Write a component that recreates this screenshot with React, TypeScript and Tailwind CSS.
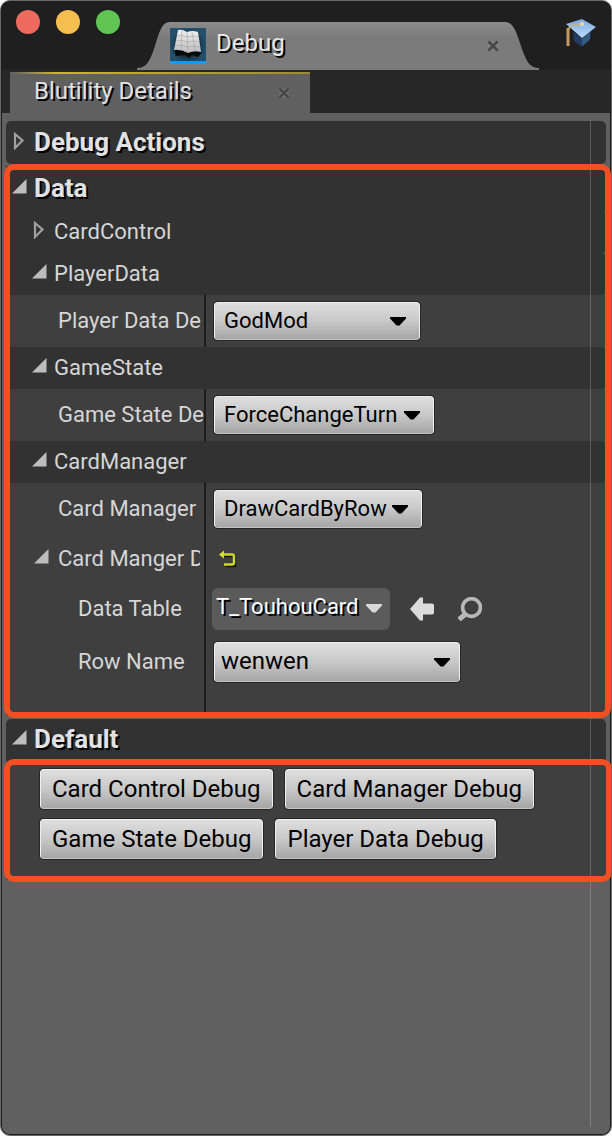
import type { ReactNode } from "react";

const FACE =
  "border border-[#efefef] border-b-[#c4c4c4] bg-linear-to-b from-[#dedede] via-[#c8c8c8] to-[#a6a6a6] text-black outline outline-[#262626] rounded-[3px]";

function OpenArrow() {
  return (
    <svg width="16" height="16" viewBox="0 0 16 16" aria-hidden="true">
      <path d="M14.500 0V14.500H0Z" fill="#bdbdbd" />
    </svg>
  );
}

function ClosedArrow() {
  return (
    <svg width="12" height="18" viewBox="0 0 12 18" aria-hidden="true">
      <path d="M3 2L10.500 8.500L3 16Z" fill="none" stroke="#a0a0a0" strokeWidth="2.200" />
    </svg>
  );
}

function Cross() {
  return (
    <svg width="12" height="12" viewBox="0 0 12 12" aria-hidden="true">
      <path d="M2 2L10 10M10 2L2 10" stroke="#8c8c8c" strokeWidth="5" opacity=".5" />
      <path d="M1.500 1.500L10.500 10.500M10.500 1.500L1.500 10.500" stroke="#484848" strokeWidth="2.600" />
    </svg>
  );
}

function Highlight({ className }: { className: string }) {
  return (
    <div
      className={`pointer-events-none absolute z-20 rounded-[10px] border-6 border-[#f15025] ${className}`}
    />
  );
}

function CategoryHeader({ title, open, className }: { title: string; open: boolean; className: string }) {
  return (
    <button
      type="button"
      aria-expanded={open}
      className={`flex w-full items-center bg-[#323232] pb-0.5 pl-1.5 text-left ${className}`}
    >
      <span className="flex w-[22px] pb-0.5">{open ? <OpenArrow /> : <ClosedArrow />}</span>
      <span className="text-[26px] leading-8 font-bold text-[#e2e2e2] [text-shadow:2px_2px_0_#000]">{title}</span>
    </button>
  );
}

function GroupHeader({ title, open }: { title: string; open: boolean }) {
  return (
    <button
      type="button"
      aria-expanded={open}
      className="flex h-[42px] w-full items-center rounded-r bg-[#323232] pl-[26px] text-left text-[22px] leading-7"
    >
      <span className="flex w-[22px] pb-1">{open ? <OpenArrow /> : <ClosedArrow />}</span>
      {title}
    </button>
  );
}

function PropertyRow({
  label,
  htmlFor,
  height,
  indent,
  arrow = false,
  children,
}: {
  label: string;
  htmlFor?: string;
  height: string;
  indent: string;
  arrow?: boolean;
  children?: ReactNode;
}) {
  return (
    <div className={`flex bg-[#3f3f3f] ${height}`}>
      <div className={`flex w-[198px] shrink-0 items-center overflow-hidden text-[22px] leading-7 ${indent}`}>
        {arrow && (
          <button type="button" aria-label={`Collapse ${label}`} className="flex w-6 shrink-0 pb-1">
            <OpenArrow />
          </button>
        )}
        {htmlFor ? (
          <label htmlFor={htmlFor} className="whitespace-nowrap">
            {label}
          </label>
        ) : (
          <span className="mr-1 overflow-hidden whitespace-nowrap">{label}</span>
        )}
      </div>
      <div className="flex min-w-0 flex-1 items-center border-l-2 border-[#1c1c1c] pl-2">{children}</div>
    </div>
  );
}

function Dropdown({
  id,
  value,
  className,
  arrowClass = "right-3.5",
}: {
  id: string;
  value: string;
  className: string;
  arrowClass?: string;
}) {
  return (
    <div className="relative">
      <select id={id} className={`block appearance-none ${FACE} ${className}`}>
        <option>{value}</option>
      </select>
      <svg
        className={`pointer-events-none absolute top-1/2 -mt-1 ${arrowClass}`}
        width="16"
        height="9"
        viewBox="0 0 16 9"
        aria-hidden="true"
      >
        <path d="M0 0H16V1.500L9.500 8.500H6.500L0 1.500Z" fill="#000" />
      </svg>
    </div>
  );
}

function BookIcon() {
  return (
    <svg width="36" height="36" viewBox="0 0 36 36" aria-hidden="true">
      <defs>
        <radialGradient id="bookBg">
          <stop offset="0" stopColor="#06121a" />
          <stop offset=".6" stopColor="#153447" />
          <stop offset="1" stopColor="#24506b" />
        </radialGradient>
        <linearGradient id="bookPage" x2="0" y2="1">
          <stop offset="0" stopColor="#f0f0f0" />
          <stop offset="1" stopColor="#bcbcbc" />
        </linearGradient>
      </defs>
      <rect width="36" height="36" fill="url(#bookBg)" />
      <path d="M4 22L32 24L28 29L22 27L19 30L15 27L6 28Z" fill="#07090b" />
      <path d="M8 2Q12 1 17 4Q22 2 28 4L31 24Q24 22 18 25Q11 21 4 22Z" fill="url(#bookPage)" />
      <path
        d="M17 4L18 25M12 3L11 21M22 4L25 22M7 8Q12 6 17 9M17 9Q23 7 29 9M6 13Q12 11 17 14Q24 12 30 14M5 18Q12 16 18 19Q24 17 31 19"
        fill="none"
        stroke="#999"
        strokeWidth=".5"
      />
      <rect y="33" width="36" height="3" fill="#0a9bff" />
    </svg>
  );
}

function CapIcon() {
  return (
    <svg width="32" height="30" viewBox="0 0 32 30" aria-hidden="true">
      <defs>
        <linearGradient id="capTop" x2="0" y2="1">
          <stop offset="0" stopColor="#7ba8e0" />
          <stop offset="1" stopColor="#b9dcfb" />
        </linearGradient>
      </defs>
      <path d="M8 14L9 23L17 29L25 22L26 13L17 20Z" fill="#233c66" />
      <path d="M17 21L25 14V21L17 28Z" fill="#365b80" />
      <path d="M1 6L17 1L31 9L17 20Z" fill="url(#capTop)" />
      <path d="M17 6L5 8L3 13V27" fill="none" stroke="#c9b184" strokeWidth="1.500" />
      <path d="M3 10V28" stroke="#c79a5c" strokeWidth="3" />
      <circle cx="17" cy="6" r="2" fill="#f0d89c" />
    </svg>
  );
}

const ACTIONS = ["Card Control Debug", "Card Manager Debug", "Game State Debug", "Player Data Debug"];

export default function App() {
  return (
    <div className="bg-white font-['Roboto',sans-serif] text-[#d6d6d6]">
      <div className="relative flex min-h-screen flex-col overflow-hidden rounded-[10px] border border-[#686868] bg-[#606060]">
        <div className="pointer-events-none absolute inset-0 z-10 rounded-[9px] border border-[#1e1e1e]" />

        <header className="flex h-[69px] justify-between bg-[#1f1f1f]">
          <div className="flex w-[136px] shrink-0 gap-4 pt-[9px] pl-[15px]">
            <button type="button" aria-label="Close" className="size-6 rounded-full bg-[#ee6a5f]" />
            <button type="button" aria-label="Minimize" className="size-6 rounded-full bg-[#f5bf4f]" />
            <button type="button" aria-label="Zoom" className="size-6 rounded-full bg-[#61c554]" />
          </div>
          <div className="flex flex-1 items-end">
            <svg width="33" height="48" viewBox="0 0 33 48" className="shrink-0" aria-hidden="true">
              <defs>
                <linearGradient id="tabFill" x2="0" y2="1">
                  <stop offset="0" stopColor="#8b8b8b" />
                  <stop offset=".35" stopColor="#7b7b7b" />
                  <stop offset="1" stopColor="#7b7b7b" />
                </linearGradient>
              </defs>
              <path d="M0 48V46C10 46 13 38 17 27C22 12 24 0 33 0V48Z" fill="url(#tabFill)" />
            </svg>
            <div className="flex h-12 flex-1 items-center bg-linear-to-b from-[#8b8b8b] via-[#7b7b7b] via-35% to-[#7b7b7b]">
              <BookIcon />
              <span className="ml-2.5 flex-1 pb-1.5 text-2xl text-[#e6e6e6] [text-shadow:2px_2px_0_#000]">Debug</span>
              <button type="button" aria-label="Close Debug" className="mr-1 p-0.5">
                <Cross />
              </button>
            </div>
            <svg width="34" height="48" viewBox="0 0 34 48" className="shrink-0" aria-hidden="true">
              <path d="M34 48V46C24 46 21 38 17 27C12 12 9 0 0 0V48Z" fill="url(#tabFill)" />
            </svg>
          </div>
          <button type="button" aria-label="Tutorials" className="mr-3.5 ml-[26px] self-start pt-[17px]">
            <CapIcon />
          </button>
        </header>

        <nav className="flex h-[43px] bg-[#272727] pt-0.5 pl-[9px]">
          <div className="flex w-[300px] flex-col rounded-t bg-[#606060]">
            <div className="h-0.5 bg-linear-to-r from-[#606060] via-[#cfb52c] via-15% to-[#9d8b32]" />
            <div className="flex flex-1 items-center pr-5 pb-1.5 pl-6">
              <span className="flex-1 text-2xl text-[#e0e0e0] [text-shadow:2px_2px_0_#000]">Blutility Details</span>
              <button type="button" aria-label="Close Blutility Details" className="pt-1">
                <Cross />
              </button>
            </div>
          </div>
        </nav>

        <main className="relative flex-1 pt-2 pr-[5px] pb-2 pl-[5px]">
          <div className="pointer-events-none absolute top-2 right-5 bottom-2 z-10 w-px bg-white/20" />

          <CategoryHeader title="Debug Actions" open={false} className="h-[43px] rounded-[5px]" />

          <section className="relative mt-0.5">
            <Highlight className="-top-0.5 -right-[5px] -bottom-0.5 -left-0.5" />
            <CategoryHeader title="Data" open className="h-[45px]" />
            <GroupHeader title="CardControl" open={false} />
            <GroupHeader title="PlayerData" open />
            <PropertyRow label="Player Data De" htmlFor="player" height="h-[52px]" indent="pl-[52px]">
              <Dropdown id="player" value="GodMod" className="h-[38px] w-[206px] pb-0.5 pl-[9px] text-[22px]" />
            </PropertyRow>
            <GroupHeader title="GameState" open />
            <PropertyRow label="Game State De" htmlFor="game" height="h-[52px]" indent="pl-[52px]">
              <Dropdown id="game" value="ForceChangeTurn" className="h-[38px] w-[220px] pb-0.5 pl-[9px] text-[22px]" />
            </PropertyRow>
            <GroupHeader title="CardManager" open />
            <PropertyRow label="Card Manager" htmlFor="manager" height="h-[52px]" indent="pl-[52px]">
              <Dropdown id="manager" value="DrawCardByRow" className="h-[38px] w-[208px] pb-0.5 pl-[9px] text-[22px]" />
            </PropertyRow>
            <PropertyRow label="Card Manger D" height="h-12" indent="pl-7" arrow>
              <button type="button" aria-label="Reset to default" className="ml-[5px]">
                <svg width="18" height="18" viewBox="0 0 18 18" fill="none" aria-hidden="true">
                  <path d="M4 5H15V15H6" stroke="#161616" strokeWidth="2.500" transform="translate(1 1)" />
                  <path d="M3 4.500H13Q15 4.500 15 6.500V12.500Q15 14.500 13 14.500H5" stroke="#cdd62f" strokeWidth="2.500" />
                  <path d="M0 4.500L5 .5V8.500Z" fill="#d8e02f" />
                </svg>
              </button>
            </PropertyRow>
            <PropertyRow label="Data Table" htmlFor="table" height="h-[52px]" indent="pl-[72px]">
              <div className="relative -ml-0.5">
                <select
                  id="table"
                  className="block h-[42px] w-[178px] appearance-none rounded-md bg-[#5b5b5b] pb-1.5 pl-1 text-[22px] text-white [text-shadow:2px_2px_0_#000]"
                >
                  <option>T_TouhouCard</option>
                </select>
                <svg
                  className="pointer-events-none absolute top-4 right-2"
                  width="16"
                  height="9"
                  viewBox="0 0 16 9"
                  aria-hidden="true"
                >
                  <path d="M0 0H16V1.500L9.500 8.500H6.500L0 1.500Z" fill="#d8d8d8" />
                </svg>
              </div>
              <button type="button" aria-label="Use selected asset" className="ml-5">
                <svg width="24" height="24" viewBox="0 0 24 24" aria-hidden="true">
                  <path d="M0 12L10 .5H13V6.500H22Q24 6.500 24 8.500V15.500Q24 17.500 22 17.500H13V23.500H10Z" fill="#dcdcdc" />
                </svg>
              </button>
              <button type="button" aria-label="Browse to asset" className="ml-6">
                <svg width="24" height="24" viewBox="0 0 24 24" fill="none" stroke="#b8b8b8" aria-hidden="true">
                  <circle cx="13.500" cy="10.500" r="8.900" strokeWidth="3.600" />
                  <path d="M7 17.500L1 22.500" strokeWidth="5" />
                </svg>
              </button>
            </PropertyRow>
            <PropertyRow label="Row Name" htmlFor="row" height="h-[54px]" indent="pl-[72px]">
              <Dropdown
                id="row"
                value="wenwen"
                className="h-10 w-[246px] pb-0.5 pl-1.5 text-2xl"
                arrowClass="right-2.5"
              />
            </PropertyRow>
            <PropertyRow label="" height="h-[27px]" indent="pl-0" />
          </section>

          <CategoryHeader title="Default" open className="mt-[3px] h-[41px] rounded-t-[5px]" />

          <section className="relative h-[120px] bg-[#3f3f3f] pt-[9px] pl-[34px]">
            <Highlight className="-top-px -right-1.5 -bottom-0.5 -left-0.5" />
            <div className="flex max-w-[520px] flex-wrap gap-x-3 gap-y-2.5">
              {ACTIONS.map((name) => (
                <button key={name} type="button" className={`h-10 px-[11px] text-2xl ${FACE}`}>
                  {name}
                </button>
              ))}
            </div>
          </section>
        </main>
      </div>
    </div>
  );
}
